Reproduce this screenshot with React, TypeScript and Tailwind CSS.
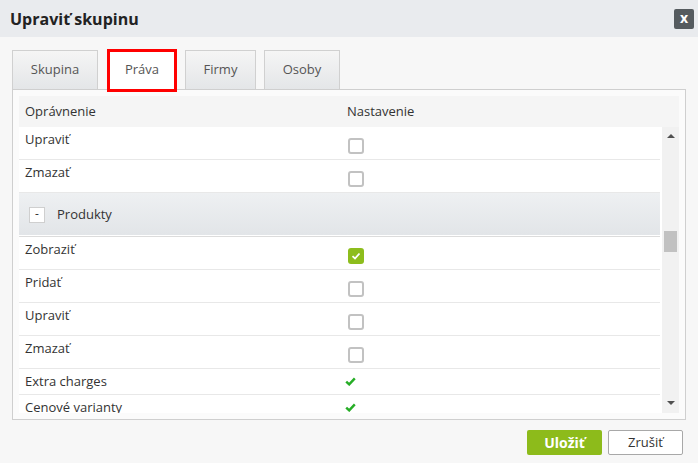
import React from 'react';

type Row =
    | { type: 'box'; label: string; checked?: boolean }
    | { type: 'tick'; label: string }
    | { type: 'group'; label: string };

const rows: Row[] = [
    { type: 'box', label: 'Upraviť' },
    { type: 'box', label: 'Zmazať' },
    { type: 'group', label: 'Produkty' },
    { type: 'box', label: 'Zobraziť', checked: true },
    { type: 'box', label: 'Pridať' },
    { type: 'box', label: 'Upraviť' },
    { type: 'box', label: 'Zmazať' },
    { type: 'tick', label: 'Extra charges' },
    { type: 'tick', label: 'Cenové varianty' },
];

const tabs = [
    { name: 'Skupina', cls: 'w-[86px]' },
    { name: 'Práva', cls: 'w-[70px] ml-[9px]', active: true },
    { name: 'Firmy', cls: 'w-[71px] ml-[8px]' },
    { name: 'Osoby', cls: 'w-[76px] ml-[8px]' },
];

const Checkbox: React.FC<{ checked?: boolean }> = ({ checked }) =>
    checked ? (
        <div className="w-[16px] h-[16px] rounded-[3px] bg-[#8dbd1d] flex items-center justify-center">
            <svg width="10" height="8" viewBox="0 0 10 8">
                <path d="M1.5 4.2 L4 6.5 L8.5 1.5" fill="none" stroke="#fff" strokeWidth="1.8" />
            </svg>
        </div>
    ) : (
        <div className="w-[16px] h-[16px] rounded-[3px] border-2 border-[#c2c2c2] bg-white" />
    );

const Tick = () => (
    <svg width="11" height="9" viewBox="0 0 11 9">
        <path d="M1.2 4.6 L4.2 7.4 L9.8 1.4" fill="none" stroke="#26ad26" strokeWidth="2.4" />
    </svg>
);

export default function App() {
    return (
        <div className="w-[698px] h-[463px] bg-[#f7f7f7] flex flex-col text-[#333] font-['Open_Sans',sans-serif] overflow-hidden">
            {/* title bar */}
            <div className="h-[37px] bg-[#e9ebee] flex items-center justify-between pl-[10px] pr-[4px] shrink-0">
                <h1 className="text-[16px] font-bold text-[#222] leading-none">Upraviť skupinu</h1>
                <button className="w-[20px] h-[20px] bg-[#555b5f] rounded-[2px] text-white text-[14px] font-bold leading-none flex items-center justify-center pb-[2px]">
                    x
                </button>
            </div>

            <div className="px-[12px] pt-[13px]">
                {/* tabs */}
                <div className="flex h-[39px]">
                    {tabs.map((t) =>
                        t.active ? (
                            <div
                                key={t.name}
                                className={`${t.cls} h-[43px] -mt-[1px] relative z-10 bg-white border-[3px] border-[#f00] flex items-center justify-center text-[13px] text-[#555]`}
                            >
                                <span className="-mt-[1px]">{t.name}</span>
                            </div>
                        ) : (
                            <div
                                key={t.name}
                                className={`${t.cls} h-[39px] border border-b-0 border-[#d0d0d0] bg-gradient-to-b from-[#f5f5f5] to-[#e4e6e8] flex items-center justify-center text-[13px] text-[#555]`}
                            >
                                {t.name}
                            </div>
                        )
                    )}
                </div>

                {/* panel */}
                <div className="border border-[#cfcfcf] bg-[#fbfbfb] p-[6px]">
                    <div className="h-[31px] bg-[#f5f5f5] flex items-center text-[13px]">
                        <div className="w-[328px] pl-[6px]">Oprávnenie</div>
                        <div>Nastavenie</div>
                    </div>
                    <div className="flex h-[286px]">
                        <div className="w-[647px] pr-[2px] bg-white overflow-hidden">
                            {rows.map((r, i) => {
                                if (r.type === 'group') {
                                    return (
                                        <div key={i} className="border-b border-[#dcdcdc]">
                                            <div className="h-[42px] mb-[1px] bg-gradient-to-b from-[#eef0f2] to-[#e2e5e8] flex items-center pt-[2px]">
                                                <div className="ml-[10px] w-[16px] h-[16px] bg-white border border-[#cfcfcf] flex items-center justify-center text-[12px] leading-none pb-[2px]">
                                                    -
                                                </div>
                                                <span className="ml-[12px] text-[13px]">{r.label}</span>
                                            </div>
                                        </div>
                                    );
                                }
                                if (r.type === 'tick') {
                                    return (
                                        <div key={i} className="h-[26px] border-b border-[#e8e8e8] flex items-center text-[13px]">
                                            <div className="w-[326px] pl-[6px]">{r.label}</div>
                                            <Tick />
                                        </div>
                                    );
                                }
                                return (
                                    <div key={i} className="h-[33px] border-b border-[#e8e8e8] flex text-[13px]">
                                        <div className="w-[329px] pl-[6px] pt-[3px] leading-[18px]">{r.label}</div>
                                        <div className="pt-[11px]">
                                            <Checkbox checked={r.checked} />
                                        </div>
                                    </div>
                                );
                            })}
                        </div>
                        {/* scrollbar */}
                        <div className="w-[17px] bg-[#f1f1f1] flex flex-col">
                            <div className="h-[17px] flex items-center justify-center">
                                <div className="w-0 h-0 border-l-[4px] border-r-[4px] border-b-[4px] border-l-transparent border-r-transparent border-b-[#505050]" />
                            </div>
                            <div className="flex-1">
                                <div className="mt-[87px] mx-[2px] h-[21px] bg-[#c1c1c1]" />
                            </div>
                            <div className="h-[17px] flex items-center justify-center pb-[3px]">
                                <div className="w-0 h-0 border-l-[4px] border-r-[4px] border-t-[4px] border-l-transparent border-r-transparent border-t-[#505050]" />
                            </div>
                        </div>
                    </div>
                </div>

                {/* footer */}
                <div className="flex justify-end gap-[6px] pr-[3px] mt-[10px]">
                    <button className="w-[75px] h-[25px] bg-[#8dbb1b] rounded-[2px] text-white text-[14px] font-bold leading-none">
                        Uložiť
                    </button>
                    <button className="w-[75px] h-[25px] bg-white border border-[#a8a8a8] rounded-[2px] text-[13px] text-[#333] leading-none">
                        Zrušiť
                    </button>
                </div>
            </div>
        </div>
    );
}
